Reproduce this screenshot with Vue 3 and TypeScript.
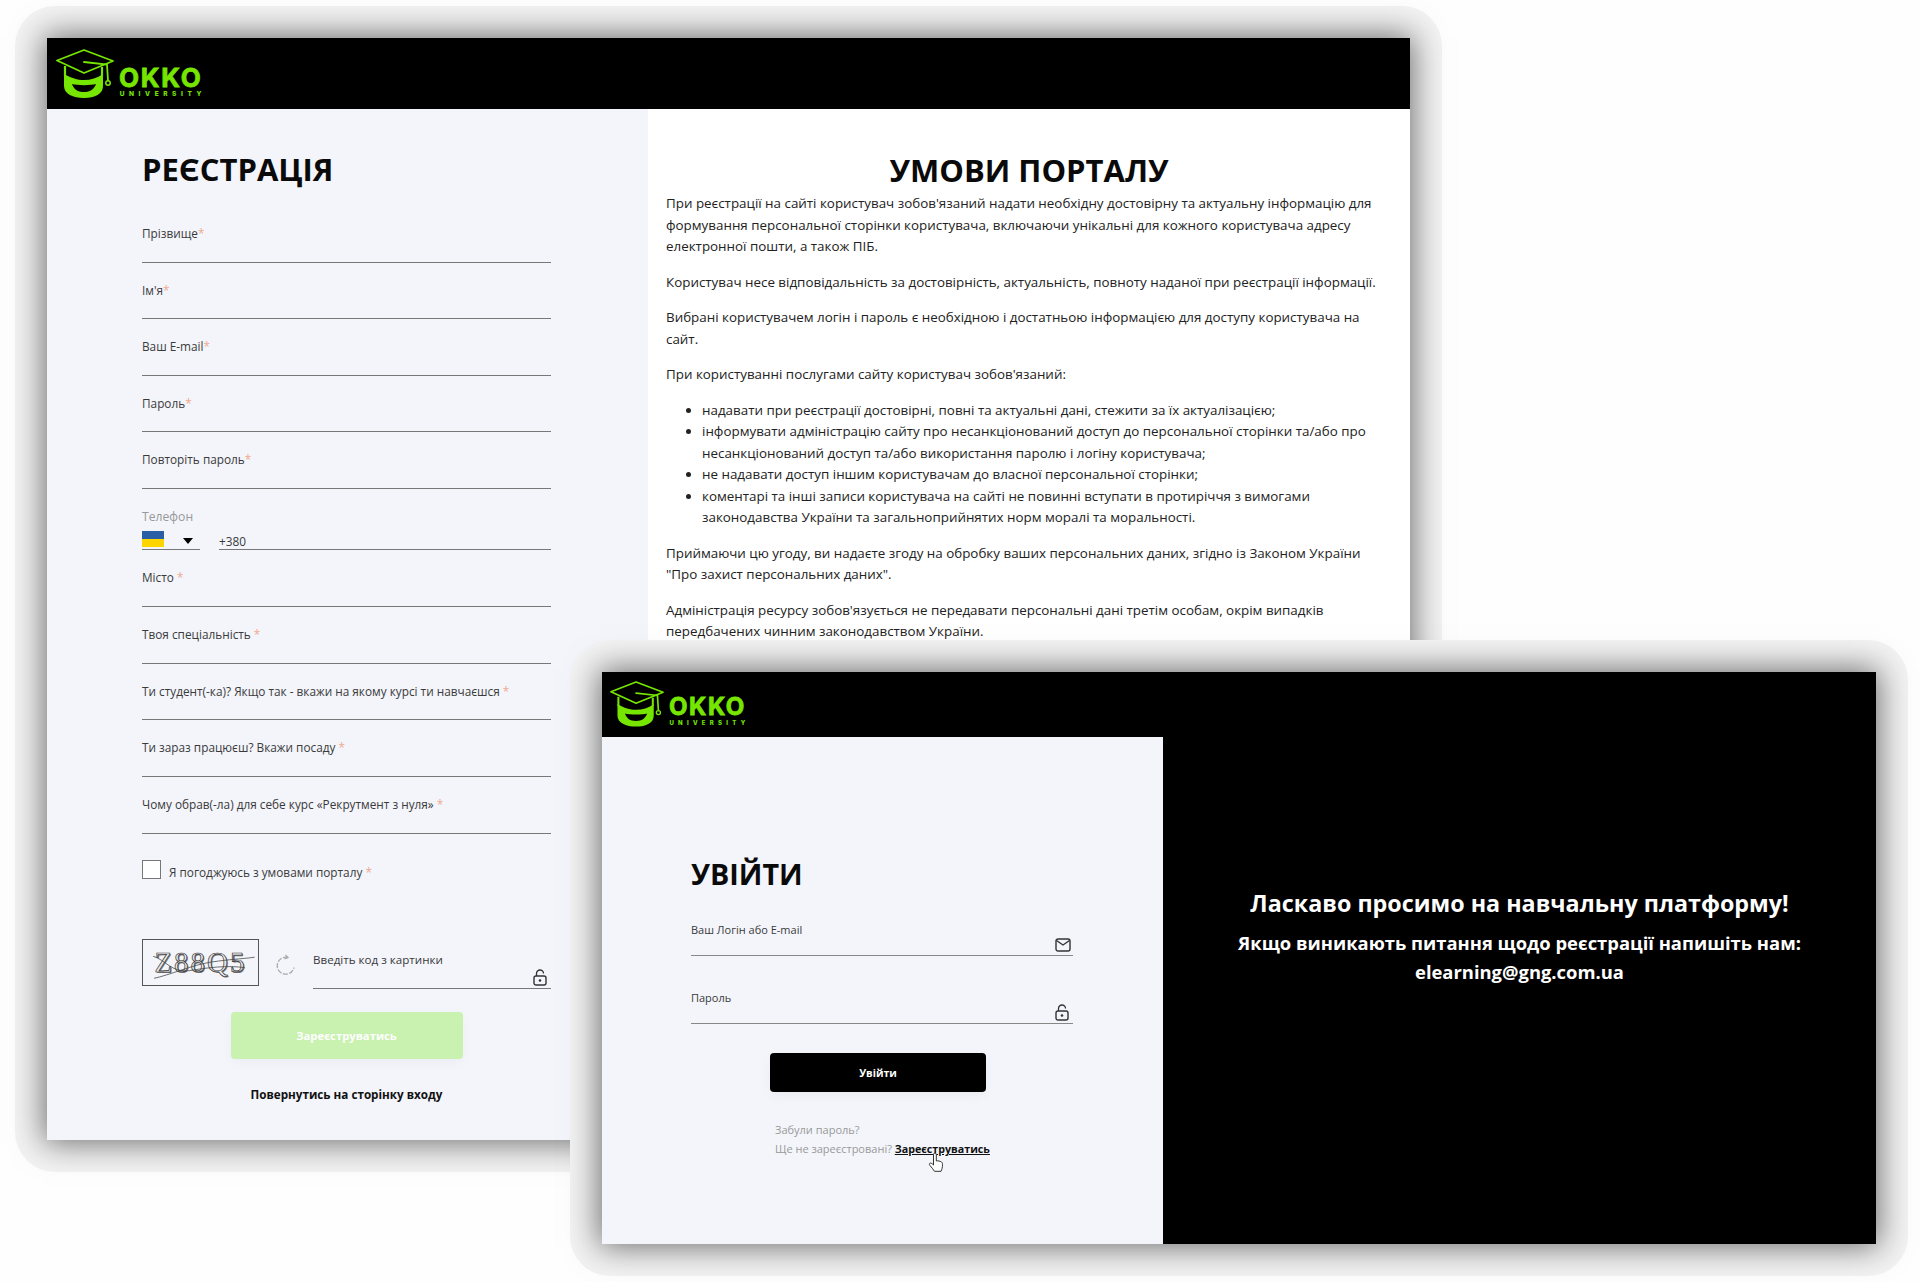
<script setup lang="ts">
interface Field {
  label: string
}

const topFields: Field[] = [
  { label: 'Прізвище' },
  { label: 'Ім\'я' },
  { label: 'Ваш E-mail' },
  { label: 'Пароль' },
  { label: 'Повторіть пароль' }
]

const bottomFields: Field[] = [
  { label: 'Місто' },
  { label: 'Твоя спеціальність' },
  { label: 'Ти студент(-ка)? Якщо так - вкажи на якому курсі ти навчаєшся' },
  { label: 'Ти зараз працюєш? Вкажи посаду' },
  { label: 'Чому обрав(-ла) для себе курс «Рекрутмент з нуля»' }
]

const duties: string[] = [
  'надавати при реєстрації достовірні, повні та актуальні дані, стежити за їх актуалізацією;',
  'інформувати адміністрацію сайту про несанкціонований доступ до персональної сторінки та/або про несанкціонований доступ та/або використання паролю і логіну користувача;',
  'не надавати доступ іншим користувачам до власної персональної сторінки;',
  'коментарі та інші записи користувача на сайті не повинні вступати в протиріччя з вимогами законодавства України та загальноприйнятих норм моралі та моральності.'
]
</script>

<template>
  <div class="page">
    <svg class="defs" width="0" height="0" aria-hidden="true">
      <symbol id="cap" viewBox="-1 -1 58 50">
        <path d="M0 10.5 27 0l29 11-29 12z" fill="none" stroke="#76e600" stroke-width="1.800" stroke-linejoin="round" />
        <path d="M27 12l23 2.5 1 16" fill="none" stroke="#76e600" stroke-width="1.800" stroke-linecap="round" />
        <circle cx="51" cy="33" r="2.2" fill="none" stroke="#76e600" stroke-width="1.500" />
        <path d="M8 16v10M45 17v9" stroke="#76e600" stroke-width="2.200" />
        <path fill-rule="evenodd" fill="#76e600" d="M7 24c8 4 13 6 20 6s13-2 19-6v12c0 8-8 12-19 12S7 44 7 36zm8 10c5 1.500 19 1.500 24 0-2 5.500-6 8-12 8-6.500 0-10-2.500-12-8z" />
      </symbol>
      <symbol id="lock" viewBox="0 0 14 17">
        <path d="M3.500 7V4.500a3.500 3.500 0 0 1 7 0" fill="none" stroke="#333" stroke-width="1.300" />
        <rect x="1" y="7" width="12" height="9" rx="2" fill="none" stroke="#333" stroke-width="1.400" />
        <circle cx="7" cy="11.500" r="1.300" fill="#333" />
      </symbol>
    </svg>

    <!-- вікно реєстрації -->
    <section class="window window-register">
      <header class="top-bar">
        <div class="logo">
          <svg class="logo-cap"><use href="#cap" /></svg>
          <div class="logo-text">
            <span class="logo-name">OKKO</span>
            <span class="logo-sub">UNIVERSITY</span>
          </div>
        </div>
      </header>
      <div class="register-body">
        <div class="register-form">
          <h1 class="title">РЕЄСТРАЦІЯ</h1>
          <div v-for="field in topFields" :key="field.label" class="field">
            <label>{{ field.label }}<i>*</i></label>
          </div>
          <div class="phone">
            <label>Телефон</label>
            <div class="phone-row">
              <div class="phone-flag">
                <span class="flag"></span>
                <span class="caret"></span>
              </div>
              <div class="phone-number">+380</div>
            </div>
          </div>
          <div v-for="field in bottomFields" :key="field.label" class="field field-lower">
            <label>{{ field.label }} <i>*</i></label>
          </div>
          <div class="agree">
            <span class="checkbox"></span>
            <label>Я погоджуюсь з умовами порталу <i>*</i></label>
          </div>
          <div class="captcha-row">
            <div class="captcha">
              <span>Z88Q5</span>
              <svg viewBox="0 0 117 47" fill="none" stroke="#444" stroke-width="0.800">
                <path d="M10 40c15-3 40-14 60-17s30-3 45-5" />
                <path d="M9 17c12 3 20 18 38 15s40-6 58-3" />
              </svg>
            </div>
            <svg class="refresh" viewBox="0 0 22 22" fill="none" stroke="#aaa" stroke-width="1.300">
              <path d="M14 3.500a8.500 8.500 0 1 0 6 10" stroke-dasharray="5 1.500" />
              <path d="M10.500 5 14 3.500 11.500 1" />
            </svg>
            <div class="captcha-input">
              <label>Введіть код з картинки</label>
              <svg class="field-icon"><use href="#lock" /></svg>
            </div>
          </div>
          <button class="submit">Зареєструватись</button>
          <a class="back">Повернутись на сторінку входу</a>
        </div>
        <div class="terms">
          <h1 class="title title-center">УМОВИ ПОРТАЛУ</h1>
          <p>При реєстрації на сайті користувач зобов'язаний надати необхідну достовірну та актуальну інформацію для формування персональної сторінки користувача, включаючи унікальні для кожного користувача адресу електронної пошти, а також ПІБ.</p>
          <p>Користувач несе відповідальність за достовірність, актуальність, повноту наданої при реєстрації інформації.</p>
          <p>Вибрані користувачем логін і пароль є необхідною і достатньою інформацією для доступу користувача на сайт.</p>
          <p>При користуванні послугами сайту користувач зобов'язаний:</p>
          <ul>
            <li v-for="duty in duties" :key="duty">{{ duty }}</li>
          </ul>
          <p>Приймаючи цю угоду, ви надаєте згоду на обробку ваших персональних даних, згідно із Законом України "Про захист персональних даних".</p>
          <p>Адміністрація ресурсу зобов'язується не передавати персональні дані третім особам, окрім випадків передбачених чинним законодавством України.</p>
        </div>
      </div>
    </section>

    <!-- вікно входу -->
    <section class="window window-login">
      <header class="top-bar top-bar-small">
        <div class="logo logo-small">
          <svg class="logo-cap"><use href="#cap" /></svg>
          <div class="logo-text">
            <span class="logo-name">OKKO</span>
            <span class="logo-sub">UNIVERSITY</span>
          </div>
        </div>
      </header>
      <div class="login-body">
        <div class="login-form">
          <h1 class="title">УВІЙТИ</h1>
          <div class="login-field">
            <label>Ваш Логін або E-mail</label>
            <svg class="field-icon mail" viewBox="0 0 16 14" fill="none" stroke="#333" stroke-width="1.400">
              <rect x="1" y="1" width="14" height="12" rx="2" />
              <path d="M1.500 2.500 8 7l6.500-4.500" />
            </svg>
          </div>
          <div class="login-field">
            <label>Пароль</label>
            <svg class="field-icon"><use href="#lock" /></svg>
          </div>
          <button class="enter">Увійти</button>
          <div class="hints">
            <div>Забули пароль?</div>
            <div>Ще не зареєстровані? <a>Зареєструватись</a></div>
            <svg class="hand" viewBox="0 0 16 22" fill="#fff" stroke="#333" stroke-width="1">
              <path d="M5.500 12V2.500a1.400 1.400 0 0 1 2.800 0V9l1-.2 1.700.2 1.800.6c1.200.5 1.700 1.300 1.700 2.700 0 3-.5 5-1.500 7H6.500c-1.200-2-3-4-4.700-6-.8-1-.4-2.200.8-2.200.9 0 2 1 2.900 1.900z" />
            </svg>
          </div>
        </div>
        <div class="welcome">
          <h2>Ласкаво просимо на навчальну платформу!</h2>
          <p>Якщо виникають питання щодо реєстрації напишіть нам:<br />elearning@gng.com.ua</p>
        </div>
      </div>
    </section>
  </div>
</template>

<style scoped>
* {
  box-sizing: border-box;
}

.page {
  position: relative;
  width: 1920px;
  height: 1282px;
  overflow: hidden;
  background: #fefefe;
  font-family: "Open Sans", "Noto Sans", sans-serif;
  font-size: 11.800px;
  color: #3a3a3a;
}

.defs {
  position: absolute;
}

/* вікна лежать на вільному полотні */
.window {
  position: absolute;
  z-index: 0;
  isolation: isolate;
}

.window::before {
  content: "";
  position: absolute;
  inset: -32px;
  z-index: -1;
  border-radius: 40px;
  background: #f3f3f4;
}

.window::after {
  content: "";
  position: absolute;
  inset: 0;
  z-index: -1;
  box-shadow: 0 0 30px 3px rgba(0, 0, 0, 0.55);
}

.window-register {
  left: 47px;
  top: 38px;
  width: 1363px;
  height: 1102px;
}

.window-login {
  left: 602px;
  top: 672px;
  width: 1274px;
  height: 572px;
  display: flex;
  flex-direction: column;
}

.top-bar {
  height: 71px;
  background: #000;
  padding: 11px 0 0 9px;
}

.top-bar-small {
  height: 65px;
  padding: 9px 0 0 8px;
}

.logo {
  display: flex;
  align-items: flex-start;
  gap: 5px;
}

.logo-cap {
  width: 58px;
  height: 50px;
  flex: none;
}

.logo-small .logo-cap {
  width: 54px;
  height: 46.500px;
}

.logo-text {
  display: flex;
  flex-direction: column;
  align-items: center;
  gap: 2px;
  padding-top: 18px;
  color: #76e600;
  font-family: Inter, "Liberation Sans", sans-serif;
}

.logo-name {
  font-size: 26px;
  font-weight: 700;
  line-height: 22px;
  letter-spacing: 1.800px;
  -webkit-text-stroke: 0.8px #76e600;
}

.logo-sub {
  font-size: 6.500px;
  font-weight: 800;
  line-height: 7px;
  letter-spacing: 4.600px;
  margin-right: -4px;
}

.logo-small .logo-text {
  padding-top: 16px;
}

.logo-small .logo-name {
  font-size: 24px;
  line-height: 20px;
  letter-spacing: 1.600px;
}

.logo-small .logo-sub {
  font-size: 6px;
  letter-spacing: 4.300px;
}

.title {
  margin: 0;
  font-size: 31px;
  font-weight: 700;
  line-height: 40px;
  color: #0a0a0a;
}

.title-center {
  text-align: center;
  margin-right: -7px;
}

.register-body {
  display: flex;
  height: 1031px;
  background: #fff;
}

.register-form {
  width: 601px;
  flex: none;
  background: #f3f5fa;
  padding: 40px 97px 0 95px;
}

.register-form > .title {
  margin-bottom: 17px;
}

label i {
  font-style: normal;
  color: #f0a98c;
}

.field {
  height: 56.600px;
  padding-top: 18px;
  border-bottom: 1.500px solid #777;
  line-height: 18px;
}

.field-lower {
  height: 56.800px;
}

.phone {
  height: 61px;
  padding-top: 19px;
  display: flex;
  flex-direction: column;
  line-height: 18px;
}

.phone > label {
  color: #999;
  font-size: 12.200px;
}

.phone-row {
  display: flex;
  gap: 19px;
  height: 24px;
}

.phone-flag {
  position: relative;
  width: 58px;
  border-bottom: 1.500px solid #777;
}

.flag {
  display: block;
  width: 22px;
  height: 16px;
  margin-top: 5px;
  background: linear-gradient(#2b5fa5 50%, #ffd500 50%);
}

.caret {
  position: absolute;
  left: 41px;
  top: 12px;
  border: 5px solid transparent;
  border-top: 6px solid #000;
  border-bottom: 0;
}

.phone-number {
  flex: 1;
  padding-top: 6px;
  border-bottom: 1.500px solid #777;
}

.agree {
  display: flex;
  align-items: center;
  gap: 8px;
  margin-top: 26px;
  height: 19px;
}

.agree label {
  padding-top: 5px;
}

.checkbox {
  width: 19px;
  height: 19px;
  border: 1.500px solid #777;
  background: #fff;
}

.captcha-row {
  display: flex;
  align-items: flex-start;
  margin-top: 60px;
  height: 50px;
}

.captcha {
  position: relative;
  width: 117px;
  height: 47px;
  flex: none;
  border: 1.500px solid #555;
  text-align: center;
  font-family: "Liberation Serif", serif;
  font-size: 29px;
  line-height: 45px;
  letter-spacing: 2px;
  color: #e8e8ea;
  -webkit-text-stroke: 0.7px #333;
  text-shadow: 1px 1px 0 #777;
}

.captcha svg {
  position: absolute;
  inset: 0;
  width: 100%;
  height: 100%;
}

.refresh {
  width: 22px;
  height: 22px;
  flex: none;
  margin: 15px 17px 0 15px;
}

.captcha-input {
  position: relative;
  flex: 1;
  height: 50px;
  padding-top: 12px;
  border-bottom: 1.500px solid #777;
  line-height: 18px;
  font-size: 11.600px;
}

.field-icon {
  position: absolute;
  right: 4px;
  bottom: 2px;
  width: 14px;
  height: 17px;
}

.submit {
  display: block;
  width: 232px;
  height: 47px;
  margin: 23px auto 0;
  border: none;
  border-radius: 4px;
  background: #c9f1b0;
  box-shadow: 0 4px 12px rgba(0, 0, 0, 0.03);
  color: #fff;
  font: 700 11.300px "Open Sans", "Noto Sans", sans-serif;
}

.back {
  display: block;
  margin-top: 25px;
  text-align: center;
  font-size: 11.700px;
  font-weight: 700;
  line-height: 20px;
  color: #111;
}

.terms {
  flex: 1;
  padding: 41px 25px 0 18px;
  font-size: 13.380px;
  line-height: 21.500px;
  color: #222;
}

.terms .title {
  margin-bottom: 3px;
}

.terms p {
  margin: 0 0 14px;
}

.terms ul {
  margin: 0 0 14px;
  padding-left: 36px;
}

.login-body {
  flex: 1;
  display: flex;
  background: #000;
}

.login-form {
  width: 561px;
  flex: none;
  background: #f3f5fa;
  padding: 122px 90px 0 89px;
}

.login-form .title {
  font-size: 28.700px;
  line-height: 30px;
}

.login-field {
  position: relative;
  height: 67px;
  margin-bottom: 1px;
  padding-top: 32px;
  border-bottom: 1.500px solid #888;
  line-height: 18px;
  font-size: 11px;
}

.mail {
  width: 16px;
  height: 14px;
  right: 2px;
  bottom: 3px;
}

.enter {
  display: block;
  width: 216px;
  height: 39px;
  margin: 29px 0 0 79px;
  border: none;
  border-radius: 4px;
  background: #000;
  box-shadow: 0 4px 12px rgba(0, 0, 0, 0.04);
  color: #fff;
  font: 700 10.500px "Open Sans", "Noto Sans", sans-serif;
}

.hints {
  position: relative;
  margin: 28px 0 0 84px;
  line-height: 19px;
  font-size: 11px;
  color: #999;
}

.hints a {
  color: #111;
  font-size: 10.700px;
  font-weight: 700;
  text-decoration: underline;
}

.hand {
  position: absolute;
  left: 153px;
  top: 32px;
  width: 16px;
  height: 22px;
}

.welcome {
  flex: 1;
  padding-top: 150px;
  text-align: center;
  color: #fff;
}

.welcome h2 {
  margin: 0;
  font-size: 23.300px;
  font-weight: 700;
  line-height: 32px;
}

.welcome p {
  margin: 9px 0 0;
  font-size: 18.400px;
  font-weight: 700;
  line-height: 29px;
}
</style>

<style>
html,
body {
  margin: 0;
  background: #fefefe;
}
</style>
